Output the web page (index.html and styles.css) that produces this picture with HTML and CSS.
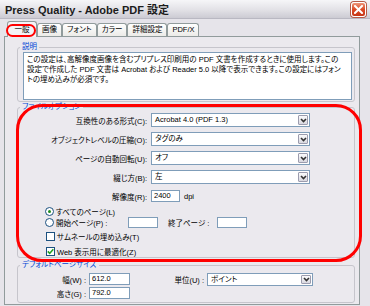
FILE: index.html
```html
<!DOCTYPE html>
<html lang="ja">
<head>
<meta charset="UTF-8" />
<title>Press Quality - Adobe PDF 設定</title>
<link rel="stylesheet" href="styles.css">
</head>
<body>
<div class="titlebar">
<span class="title">Press Quality - Adobe PDF 設定</span>
<span class="close"><svg width="9" height="9" viewBox="0 0 9 9"><path d="M1 1L8 8M8 1L1 8" stroke="#fff" stroke-width="2" stroke-linecap="square"/></svg></span>
</div>

<div class="dialog">
<div class="tabs">
<span class="tab active">一般</span>
<span class="tab">画像</span>
<span class="tab">フォント</span>
<span class="tab">カラー</span>
<span class="tab">詳細設定</span>
<span class="tab">PDF/X</span>
</div>

<div class="panel">
<fieldset class="group">
<legend>説明</legend>
<div class="desc">この設定は、高解像度画像を含むプリプレス印刷用の PDF 文書を作成するときに使用します。この<br>設定で作成した PDF 文書は Acrobat および Reader 5.0 以降で表示できます。この設定にはフォン<br>トの埋め込みが必須です。</div>
</fieldset>

<div class="highlight">
<fieldset class="group">
<legend>ファイルオプション</legend>
<div class="form-grid">
<label>互換性のある形式(C):</label>
<div class="select"><span>Acrobat 4.0 (PDF 1.3)</span><i class="arrow"><svg width="7" height="5" viewBox="0 0 7 5"><path d="M1 1L3.5 3.5L6 1" fill="none" stroke="#333" stroke-width="1.6"/></svg></i></div>
<label>オブジェクトレベルの圧縮(O):</label>
<div class="select"><span>タグのみ</span><i class="arrow"><svg width="7" height="5" viewBox="0 0 7 5"><path d="M1 1L3.5 3.5L6 1" fill="none" stroke="#333" stroke-width="1.6"/></svg></i></div>
<label>ページの自動回転(U):</label>
<div class="select"><span>オフ</span><i class="arrow"><svg width="7" height="5" viewBox="0 0 7 5"><path d="M1 1L3.5 3.5L6 1" fill="none" stroke="#333" stroke-width="1.6"/></svg></i></div>
<label>綴じ方(B):</label>
<div class="select"><span>左</span><i class="arrow"><svg width="7" height="5" viewBox="0 0 7 5"><path d="M1 1L3.5 3.5L6 1" fill="none" stroke="#333" stroke-width="1.6"/></svg></i></div>
<label>解像度(R):</label>
<div class="inline"><span class="field dpi">2400</span><span>dpi</span></div>
</div>

<div class="choices">
<div class="choice"><span class="radio on"></span><span>すべてのページ(L)</span></div>
<div class="choice"><span class="radio"></span><span class="start-label">開始ページ(P) :</span><span class="field page"></span><span class="end-label">終了ページ :</span><span class="field page"></span></div>
<div class="choice check"><span class="box"></span><span>サムネールの埋め込み(T)</span></div>
<div class="choice check"><span class="box"><svg width="7" height="7" viewBox="0 0 7 7"><path d="M0.8 3.4L2.7 5.4L6.3 1.2" fill="none" stroke="#21a121" stroke-width="1.6"/></svg></span><span>Web 表示用に最適化(Z)</span></div>
</div>
</fieldset>
</div>

<fieldset class="group size">
<legend>デフォルトページサイズ</legend>
<div class="size-grid">
<label>幅(W) :</label>
<span class="field">612.0</span>
<label>単位(U) :</label>
<div class="select unit"><span>ポイント</span><i class="arrow"><svg width="7" height="5" viewBox="0 0 7 5"><path d="M1 1L3.5 3.5L6 1" fill="none" stroke="#333" stroke-width="1.6"/></svg></i></div>
<label>高さ(G) :</label>
<span class="field">792.0</span>
</div>
</fieldset>
</div>
</div>
</body>
</html>
```

FILE: styles.css
```css
* {
box-sizing: border-box;
}

body {
margin: 0;
width: 370px;
height: 306px;
overflow: hidden;
background: #e6e4ea;
font-family: "Liberation Sans", "Noto Sans CJK JP", sans-serif;
font-size: 7.5px;
font-feature-settings: "palt";
color: #000;
}

.titlebar {
height: 19px;
display: flex;
align-items: center;
justify-content: space-between;
padding: 0 4px 0 5px;
background: linear-gradient(#f6f6f8, #e2e1e6 55%, #cccbd3);
border-bottom: 1px solid #b9b8c2;
}

.title {
font-size: 11px;
font-weight: bold;
color: #1c1c1c;
}

.close {
width: 15px;
height: 15px;
display: flex;
align-items: center;
justify-content: center;
border: 1px solid #fff;
border-radius: 3px;
background: linear-gradient(#ec967b, #dc4a26 50%, #c53718);
box-shadow: 0 0 0 1px #b75a48;
}

.dialog {
padding: 2px 0 0 4px;
}

.tabs {
display: flex;
align-items: flex-end;
height: 15px;
padding-left: 3px;
}

.tab {
height: 13px;
padding: 0 4px;
line-height: 12px;
border: 1px solid #919b9c;
border-bottom: none;
border-radius: 3px 3px 0 0;
background: linear-gradient(#fff, #ecebe8);
}

.tab.active {
position: relative;
height: 16px;
margin-bottom: -1px;
padding: 0 6.5px;
line-height: 15px;
background: #f4f3f6;
z-index: 1;
}

.tab.active::after {
content: "";
position: absolute;
top: 2px;
left: -2px;
right: 0;
bottom: 0;
border: 2px solid #ff0000;
border-radius: 7px;
}

.panel {
width: 356px;
height: 269px;
padding: 5px 0 0 12px;
border: 1px solid #919b9c;
background: #ebe9ee;
}

.group {
width: 338px;
margin: 0;
padding: 0 0 1px 0;
border: 1px solid #c6c5cc;
border-radius: 3px;
min-width: 0;
}

.group legend {
margin-left: 2px;
padding: 0 2px;
height: 10px;
line-height: 10px;
color: #0046d5;
}

.desc {
margin-left: 5px;
width: 329px;
height: 48px;
padding: 2px 3px;
border: 1px solid #7f9db9;
background: #fff;
line-height: 10px;
white-space: nowrap;
}

.highlight {
position: relative;
}

.highlight::after {
content: "";
position: absolute;
top: 2px;
left: -1px;
right: -3px;
bottom: -4px;
border: 3px solid #ff0000;
border-radius: 26px;
}

.highlight .group {
padding: 0;
}

.form-grid {
display: grid;
grid-template-columns: 129px 159px;
grid-auto-rows: 14px;
column-gap: 4px;
row-gap: 5px;
align-items: center;
margin-top: 1px;
}

.form-grid label,
.size-grid label {
text-align: right;
}

.select {
display: flex;
height: 14px;
border: 1px solid #7f9db9;
background: #fff;
}

.select span {
flex: 1;
padding-left: 3px;
line-height: 12px;
}

.arrow {
width: 10px;
margin: 1px;
display: flex;
align-items: center;
justify-content: center;
border: 1px solid #9c9cae;
border-radius: 1px;
background: linear-gradient(#fbfbfc, #d9d8e0);
}

.field {
display: block;
height: 12px;
padding: 0 2px;
line-height: 10px;
border: 1px solid #7f9db9;
background: #fff;
}

.inline {
display: flex;
align-items: center;
gap: 4px;
}

.dpi {
width: 29px;
}

.choices {
margin-top: 3px;
padding-left: 27px;
}

.choice {
display: flex;
align-items: center;
height: 11px;
}

.choice.check {
margin-top: 3px;
}

.choice.check + .choice.check {
margin-top: 4px;
}

.radio {
width: 9px;
height: 9px;
margin-right: 2px;
display: flex;
align-items: center;
justify-content: center;
border: 1px solid #1c5180;
border-radius: 50%;
background: #fff;
}

.radio.on::after {
content: "";
width: 3px;
height: 3px;
border-radius: 50%;
background: #1e8a1e;
}

.start-label {
width: 72px;
}

.page {
width: 30px;
height: 11px;
}

.end-label {
width: 49px;
margin-left: 10px;
}

.box {
width: 9px;
height: 9px;
margin-left: 1px;
margin-right: 2px;
display: flex;
align-items: center;
justify-content: center;
border: 1px solid #1c5180;
background: #fff;
}

.size {
margin-top: 2px;
padding-bottom: 3px;
}

.size-grid {
display: grid;
grid-template-columns: 68px 41px 71px 106px;
grid-auto-rows: 12px;
column-gap: 3px;
row-gap: 2px;
align-items: center;
margin-top: 3px;
}

.unit {
height: 13px;
}

.unit span {
line-height: 11px;
}
```
